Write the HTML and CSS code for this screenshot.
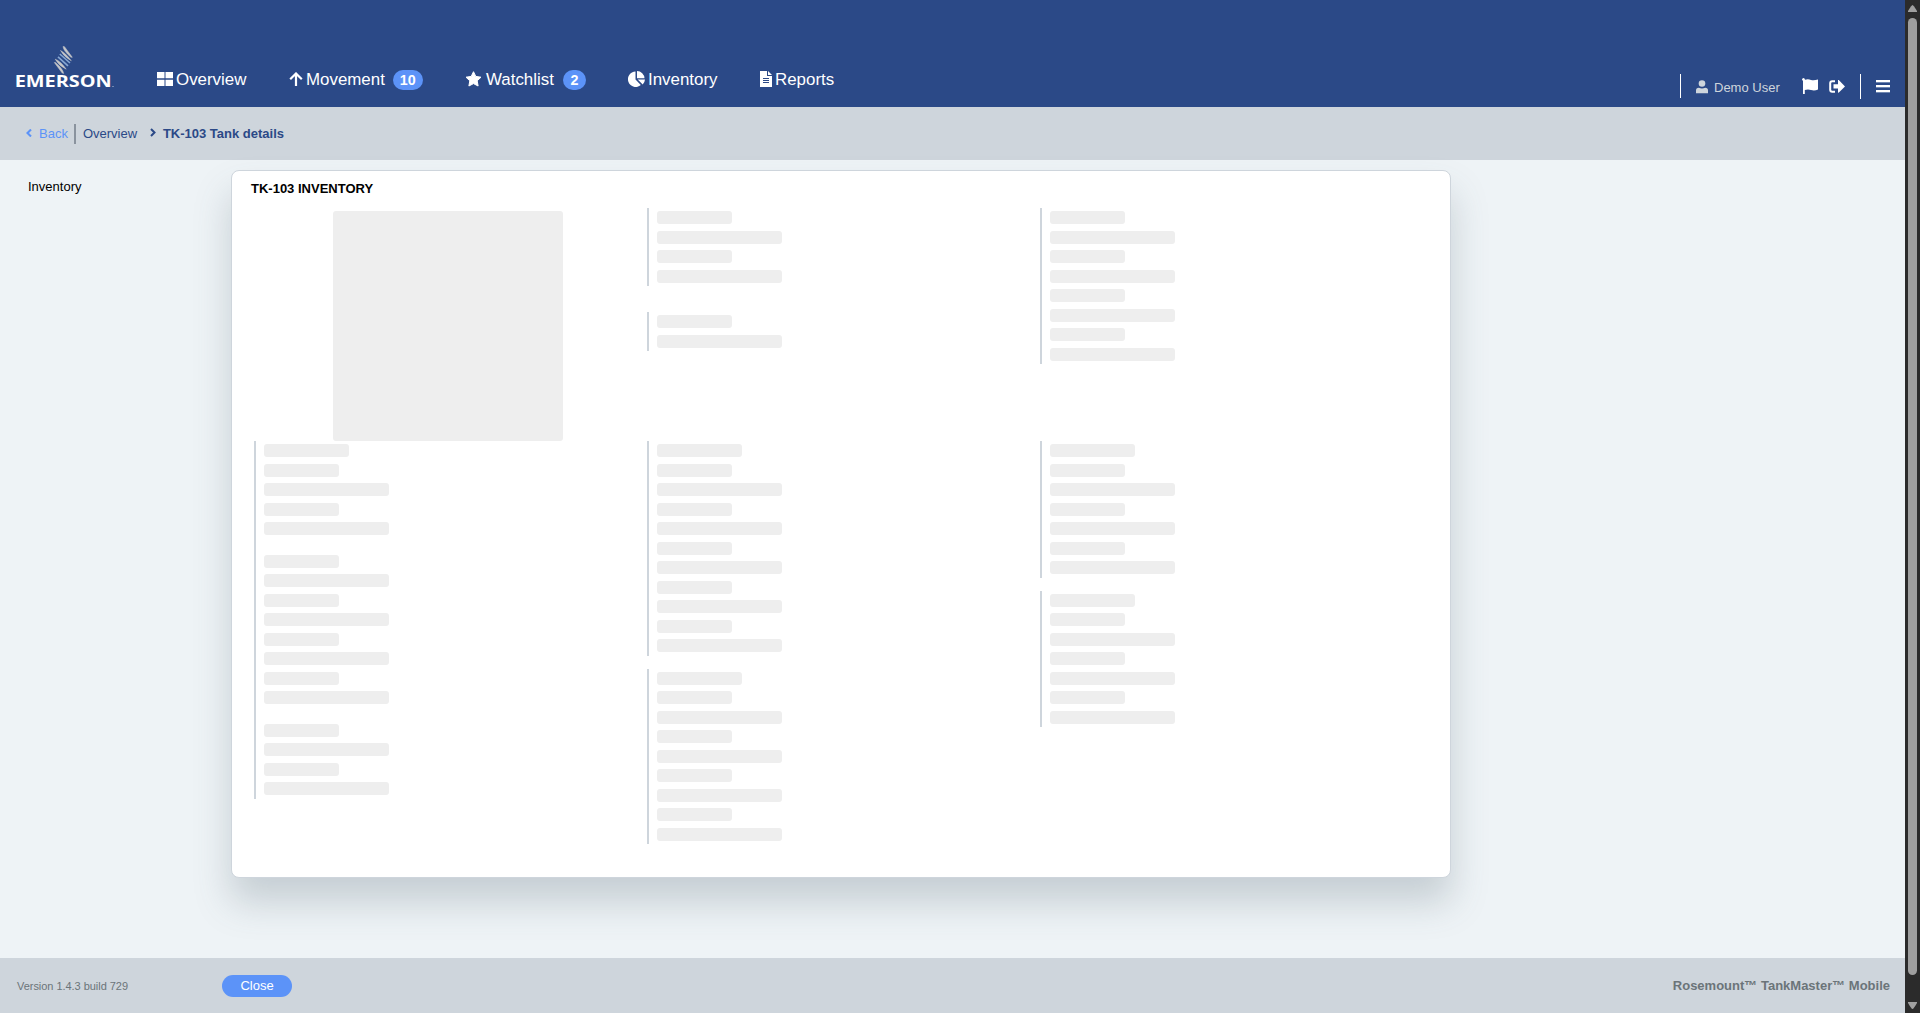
FILE: index.html
```html
<!DOCTYPE html>
<html lang="en">
<head>
<meta charset="utf-8">
<title>TK-103 Tank details</title>
<link rel="stylesheet" href="styles.css">
</head>
<body>
<div class="page">
  <header class="header">
    <svg class="logo" width="102" height="46" viewBox="0 0 102 46">
      <g fill="#c6c7c9" stroke="#c6c7c9" stroke-width=".5">
        <path d="M48 1.500 49.500 1.700 57.300 12.300 56 12.300Q48.500 6 48 1.500z"/>
        <path d="M45.500 5.500Q50 7.500 56.300 15.800 49 12 45.500 5.500z"/>
        <path d="M40.200 14.200Q45.500 16 51.200 24.200 44 21 40.200 14.200z"/>
        <path d="M39.300 17.500 40.500 17.500Q48 24 48.700 28.500L47.200 28z"/>
      </g>
      <g fill="none" stroke="#86a6d2" stroke-width="1.600">
        <path d="M44.800 9 55 18"/>
        <path d="M43 11.800 53 20.800"/>
      </g>
      <text class="logo-text" x="-.3" y="42" textLength="97" lengthAdjust="spacingAndGlyphs">EMERSON</text>
      <rect x="97" y="41" width="2" height="1" fill="#7188b1"/>
    </svg>
    <nav class="nav">
      <a class="nav-item overview"><svg width="16" height="14"><path fill="#fff" d="M0 0h7.500v6.300H0zM8.500 0H16v6.300H8.500zM0 7.700h7.500V14H0zM8.500 7.700H16V14H8.500z"/></svg><span>Overview</span></a>
      <a class="nav-item movement"><svg width="14" height="15" viewBox="0 0 14 15"><path d="M7 14V2M1.200 7.300 7 1.500l5.800 5.800" fill="none" stroke="#fff" stroke-width="2.200"/></svg><span>Movement</span><b class="badge">10</b></a>
      <a class="nav-item watchlist"><svg width="17" height="16" viewBox="0 0 17 16"><path fill="#fff" stroke="#fff" stroke-linejoin="round" d="m8.500.7 2.300 4.700 5.200.8-3.800 3.600.9 5.200-4.600-2.400L3.900 15l.9-5.200L1 6.200l5.200-.8z"/></svg><span>Watchlist</span><b class="badge">2</b></a>
      <a class="nav-item inventory"><svg width="17" height="16" viewBox="0 0 17 16"><path fill="#fff" d="M7.500.5v8l5.300 5.400A7.700 7.700 0 1 1 7.500.5zM9 0a7.500 7.500 0 0 1 7.500 7.300H9zM9.700 8.500H17a7.500 7.500 0 0 1-2.300 4.900z"/></svg><span>Inventory</span></a>
      <a class="nav-item reports"><svg width="12" height="16" viewBox="0 0 12 16"><path fill="#fff" d="M0 0h7v5h5v11H0zM8 0l4 4H8z"/><path stroke="#2b4987" d="M3 7.500h6M3 9.500h6M3 11.500h6"/></svg><span>Reports</span></a>
    </nav>
    <div class="tools">
      <i class="divider"></i>
      <svg class="user-icon" width="12" height="14" viewBox="0 0 12 14"><circle cx="6" cy="3.500" r="3.300"/><path d="M0 13.300V10.500Q0 7.700 2.800 7.700q3.200 1.500 6.400 0Q12 7.700 12 10.500v2.800z"/></svg>
      <span class="user-name">Demo User</span>
      <svg class="flag" width="16" height="16" viewBox="0 0 16 16"><path fill="#fff" d="M0 1.500Q.2 0 1.500 0T3 1.700q3-1 6 .2 3 .8 7-.5v10q-3 1.700-7 .7-3-1.300-6.200 0V16H1V2.700Q0 2.500 0 1.500z"/></svg>
      <svg class="logout" width="16" height="13" viewBox="0 0 16 13"><path d="M6 1.200H3.200Q1.200 1.200 1.200 3.200v6.500q0 2 2 2H6" fill="none" stroke="#fff" stroke-width="2"/><path fill="#fff" d="M4.500 4.200H9V0l.6-.2L16 6.400l-6.400 6.400L9 12.600V8.500H4.500z"/></svg>
      <i class="divider last"></i>
      <span class="menu"><i></i><i></i><i></i></span>
    </div>
  </header>

  <div class="crumbs">
    <svg class="back-icon" width="6" height="8" viewBox="0 0 6 8"><path d="M5 .5 1.500 4 5 7.500" fill="none" stroke="#5c93f8" stroke-width="2.100"/></svg>
    <a class="back">Back</a>
    <a class="crumb">Overview</a>
    <svg class="next-icon" width="6" height="9" viewBox="0 0 6 9"><path d="M1 1 4.500 4.500 1 8" fill="none" stroke="#2b4987" stroke-width="2"/></svg>
    <strong>TK-103 Tank details</strong>
  </div>

  <main class="main">
    <aside class="side">Inventory</aside>
    <section class="card">
      <h1>TK-103 INVENTORY</h1>
      <div class="grid top">
        <div class="picture"></div>
        <div class="col">
          <div class="group first"><p></p><p class="l"></p><p></p><p class="l"></p></div>
          <div class="group"><p></p><p class="l"></p></div>
        </div>
        <div class="col">
          <div class="group"><p></p><p class="l"></p><p></p><p class="l"></p><p></p><p class="l"></p><p></p><p class="l"></p></div>
        </div>
      </div>
      <div class="grid">
        <div class="col">
          <div class="group"><p class="h"></p><p></p><p class="l"></p><p></p><p class="l"></p>
            <p class="gap"></p><p class="l"></p><p></p><p class="l"></p><p></p><p class="l"></p><p></p><p class="l"></p>
            <p class="gap"></p><p class="l"></p><p></p><p class="l"></p></div>
        </div>
        <div class="col">
          <div class="group"><p class="h"></p><p></p><p class="l"></p><p></p><p class="l"></p><p></p><p class="l"></p><p></p><p class="l"></p><p></p><p class="l"></p></div>
          <div class="group"><p class="h"></p><p></p><p class="l"></p><p></p><p class="l"></p><p></p><p class="l"></p><p></p><p class="l"></p></div>
        </div>
        <div class="col">
          <div class="group"><p class="h"></p><p></p><p class="l"></p><p></p><p class="l"></p><p></p><p class="l"></p></div>
          <div class="group"><p class="h"></p><p></p><p class="l"></p><p></p><p class="l"></p><p></p><p class="l"></p></div>
        </div>
      </div>
    </section>
  </main>

  <footer class="footer">
    <span class="version">Version 1.4.3 build 729</span>
    <button class="close">Close</button>
    <strong class="product">Rosemount™ TankMaster™ Mobile</strong>
  </footer>
</div>
<div class="scrollbar">
  <svg width="9" height="7"><path d="M4.500 0Q5.500 0 9 6v1H0V6Q3.500 0 4.500 0z"/></svg>
  <div class="thumb"></div>
  <svg width="9" height="7"><path d="M4.500 7Q5.500 7 9 1V0H0v1q3.500 6 4.500 6z"/></svg>
</div>
</body>
</html>
```
FILE: styles.css
```css
* { box-sizing: border-box; }
body {
  margin: 0;
  height: 1013px;
  display: flex;
  overflow: hidden;
  font: 13px/15px "Liberation Sans", Arial, sans-serif;
  color: #000;
}
svg { display: block; flex: none; }
.page { flex: 1; display: flex; flex-direction: column; background: #eef3f6; }

.header { height: 107px; flex: none; display: flex; align-items: flex-start; background: #2b4987; color: #fff; }
.logo { margin: 45px 0 0 15px; overflow: visible; }
.logo-text { font: bold 15.4px "Open Sans", sans-serif; fill: #fff; }
.nav { display: flex; margin: 69px 0 0 40px; }
.nav-item { display: flex; align-items: center; gap: 3px; height: 20px; font-size: 16.9px; line-height: 20px; }
.nav-item span { white-space: nowrap; padding-top: 2px; }
.overview { width: 132px; }
.movement { width: 176px; }
.watchlist { width: 163px; gap: 4px; }
.inventory { width: 132px; }
.badge {
  height: 20px; padding: 0 7px; margin: 2px 0 0 5px; border-radius: 10px;
  background: #5c93f8; font-size: 14.300px; line-height: 21px;
}
.watchlist .badge { padding: 0 7.500px; }
.tools { margin: 74px 15px 0 auto; height: 25px; display: flex; align-items: flex-start; }
.divider { width: 1px; height: 24px; background: #fff; }
.divider.last { height: 25px; margin-left: 15px; }
.user-icon { margin: 6px 0 0 15px; fill: #ced5dc; }
.user-name { margin: 6px 0 0 6px; width: 88px; color: #ced5dc; }
.flag { margin-top: 4px; }
.logout { margin: 6px 0 0 11px; }
.menu { width: 14px; margin: 6px 0 0 15px; display: flex; flex-direction: column; gap: 3px; }
.menu i { height: 2px; background: #fff; box-shadow: 0 1px #6f86b1; }

.crumbs { height: 53px; flex: none; display: flex; align-items: center; background: #ced5dc; color: #2b4987; padding-left: 26px; }
.back-icon { margin-bottom: 2px; }
.back { color: #5c93f8; margin-left: 7px; padding-right: 6px; border-right: 2px solid #8a939e; line-height: 20px; }
.crumb { margin-left: 7px; width: 67px; }
.next-icon { margin: 0 7px 2px 0; }

.main { flex: 1; display: flex; align-items: flex-start; }
.side { width: 231px; padding: 19px 0 0 28px; }
.card {
  width: 1220px; height: 708px; margin-top: 10px; padding: 10px 22px 0;
  border: 1px solid #ced5dc; border-radius: 8px; background: #fff;
  box-shadow: 0 24px 36px rgba(80, 98, 112, .25);
}
.card h1 { margin: 0 0 12px -3px; font-size: 13px; line-height: 15px; }
.grid { display: grid; grid-template-columns: 393px 393px 388px; }
.top { height: 233px; }
.picture { width: 230px; height: 230px; margin: 3px 0 0 79px; border-radius: 3px; background: #eee; }
.col { display: flex; flex-direction: column; gap: 13px; }
.group { border-left: 2px solid #ced5dc; padding-left: 8px; }
.first { margin-bottom: 13px; }
.group p { width: 75px; height: 19.5px; margin: 0; padding: 3px 0 3.5px; }
.group p::before { content: ""; display: block; height: 13px; border-radius: 3px; background: #eee; }
.group .h { width: 85px; }
.group .l { width: 125px; }
.group .gap { margin-top: 13px; }

.footer { height: 55px; flex: none; display: flex; align-items: center; background: #ced5dc; color: #6b7479; padding: 0 15px 0 17px; }
.version { width: 205px; padding-top: 2px; font-size: 11px; letter-spacing: -.04px; }
.close { width: 70px; height: 22px; margin-top: 1px; padding: 0 0 1px; border: 0; border-radius: 11px; background: #5c93f8; color: #fff; font: 13px "Liberation Sans", Arial, sans-serif; }
.product { margin-left: auto; }

.scrollbar { width: 15px; padding: 5px 3px 4px; background: #2b2b2b; display: flex; flex-direction: column; fill: #9f9f9f; }
.thumb { height: 957px; margin: 6px 0 27px; border-radius: 5px; background: #9f9f9f; }
```
